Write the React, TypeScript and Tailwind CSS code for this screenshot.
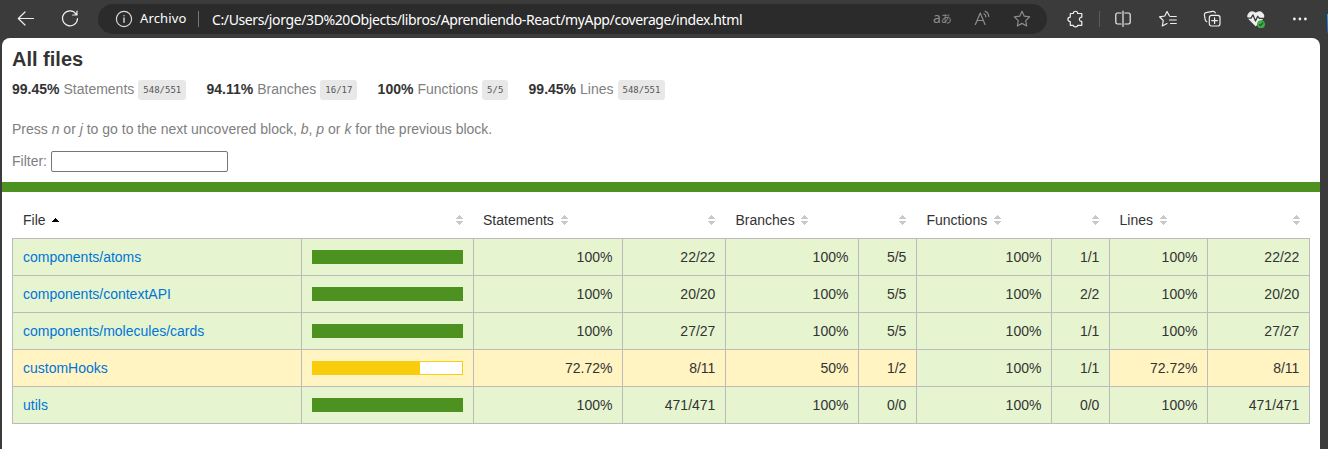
import type { ReactNode } from "react";

type Level = "high" | "medium";
type Row = { file: string; pct: number; level: Level; cells: { text: string; level: Level }[] };

const h = (text: string) => ({ text, level: "high" as Level });
const m = (text: string) => ({ text, level: "medium" as Level });

const rows: Row[] = [
  { file: "components/atoms", pct: 100, level: "high", cells: [h("100%"), h("22/22"), h("100%"), h("5/5"), h("100%"), h("1/1"), h("100%"), h("22/22")] },
  { file: "components/contextAPI", pct: 100, level: "high", cells: [h("100%"), h("20/20"), h("100%"), h("5/5"), h("100%"), h("2/2"), h("100%"), h("20/20")] },
  { file: "components/molecules/cards", pct: 100, level: "high", cells: [h("100%"), h("27/27"), h("100%"), h("5/5"), h("100%"), h("1/1"), h("100%"), h("27/27")] },
  { file: "customHooks", pct: 72, level: "medium", cells: [m("72.72%"), m("8/11"), m("50%"), m("1/2"), h("100%"), h("1/1"), m("72.72%"), m("8/11")] },
  { file: "utils", pct: 100, level: "high", cells: [h("100%"), h("471/471"), h("100%"), h("0/0"), h("100%"), h("0/0"), h("100%"), h("471/471")] },
];

const stats = [
  { pct: "99.45%", label: "Statements", frac: "548/551" },
  { pct: "94.11%", label: "Branches", frac: "16/17" },
  { pct: "100%", label: "Functions", frac: "5/5" },
  { pct: "99.45%", label: "Lines", frac: "548/551" },
];

const levelBg: Record<Level, string> = { high: "bg-[#e6f5d0]", medium: "bg-[#fff4c2]" };
const columns = ["File", "", "Statements", "", "Branches", "", "Functions", "", "Lines", ""];

function Sorter({ active = false }: { active?: boolean }) {
  return (
    <svg width="8" height="10" viewBox="0 0 8 10" className="shrink-0" shapeRendering="crispEdges">
      {active ? (
        <path d="M4 3L8 7H0z" fill="#000" />
      ) : (
        <path d="M4 0L8 4H0zM0 6h8L4 10z" fill="#c9c9c9" />
      )}
    </svg>
  );
}

function Icon({ children, className = "" }: { children: ReactNode; className?: string }) {
  return (
    <svg width="20" height="20" viewBox="0 0 20 20" fill="none" stroke="currentColor" strokeWidth="1.2" strokeLinecap="round" strokeLinejoin="round" className={`shrink-0 ${className}`}>
      {children}
    </svg>
  );
}

function BrowserBar() {
  return (
    <header className="flex h-[38px] shrink-0 items-center bg-[#3b3b3b] text-[#eeeeee]">
      <Icon className="ml-4">
        <path d="M17.5 9.5H2.5M9 3L2.3 9.5L9 16" />
      </Icon>
      <Icon className="ml-6">
        <path d="M16.3 5.3A7.5 7.5 0 1 0 17.5 9.5M17 2v4h-4.3" />
      </Icon>
      <div className="ml-[18px] flex h-[30px] w-[949px] items-center rounded-full bg-[#2b2b2b]">
        <Icon className="ml-4 text-[#d8d8d8]">
          <circle cx="10" cy="10" r="7.6" />
          <path d="M10 9v4.3M10 6.6v.1" strokeWidth="1.4" />
        </Icon>
        <span className="ml-[6px] w-[58px] whitespace-nowrap font-['Noto_Sans',sans-serif] text-[13px] tracking-[0.15px] text-white">Archivo</span>
        <span className="h-4 w-px bg-[#777777]" />
        <span className="ml-[13px] w-[721px] whitespace-nowrap font-['Noto_Sans',sans-serif] text-[14px] tracking-[-0.385px] text-white">
          C:/Users/jorge/3D%20Objects/libros/Aprendiendo-React/myApp/coverage/index.html
        </span>
        <span className="flex w-[19px] items-baseline pb-[2px] leading-none text-[#8d8d8d]">
          <span className="font-['Noto_Sans',sans-serif] text-[14px]">a</span>
          <span className="font-['Noto_Sans_CJK_JP',sans-serif] text-[11px] leading-none">あ</span>
        </span>
        <Icon className="ml-[20px] text-[#8d8d8d]">
          <path d="M3.4 15.5L8.2 4L13 15.5M5 11.5h6.4M12 4.7q1.9 1 1.8 3.1M13.2 2.2q3.6 1.8 3.5 5.3" />
        </Icon>
        <Icon className="ml-5 text-[#8d8d8d]">
          <path d="M10 2.3l2.3 4.9 5.4.7-4 3.7 1 5.4-4.7-2.6L5.3 17l1-5.4-4-3.7 5.4-.7z" />
        </Icon>
      </div>
      <Icon className="ml-[18px]">
        <path d="M5.3 4.5h3c0-3 4.4-3 4.4 0h4.1v3.7c-3.2-.2-3.2 4.4 0 4.2v3.9h-4.1c0 2.1-4.4 2.1-4.4 0h-3v-3.8c-3.2 0-3.2-4.4 0-4.4z" />
      </Icon>
      <span className="ml-[14px] h-4 w-px bg-[#5b5b5b]" />
      <Icon className="ml-[13px]">
        <path d="M8.2 4H4.5Q2.8 4 2.8 5.7v7.6Q2.8 15 4.5 15H8.2M11.8 4h3.7q1.7 0 1.7 1.7v7.6q0 1.7-1.7 1.7h-3.7M10 2v15.5" />
      </Icon>
      <Icon className="ml-[25px]">
        <path d="M11.5 7L9 2.5L6.8 7L1.5 7.8L5.3 11.5L4.3 17L9 14.5M12.5 7.5h5.8M11.5 11h6.8M12.5 14.5h5.8" />
      </Icon>
      <Icon className="ml-[24px]">
        <rect x="7.3" y="6.3" width="10.7" height="10.7" rx="2.2" />
        <path d="M12.6 8.8v5.6M9.8 11.6h5.6M4.8 12.7Q3.4 12 3.2 10.6L2.4 6Q2.2 4.2 4 3.7l6.7-1.3q2-.3 2.6 1.5" />
      </Icon>
      <Icon className="ml-[24px]">
        <path d="M9.7 16.5L3 9.8C-.2 6 4.8.2 9.7 4.5C14.6.2 19.8 6 16.5 9.8z" fill="#eeeeee" />
        <path d="M1 9.2h4l2-3.3 2.5 6.2 2.2-4.8 1.7 2H18" stroke="#3b3b3b" strokeWidth="1.3" />
        <circle cx="15" cy="15.2" r="3.9" fill="#3fae49" stroke="none" />
        <path d="M13.3 15.6l1.1 1 2.4-2.6" stroke="#1f5c25" />
      </Icon>
      <Icon className="ml-[24px]">
        <g fill="#eeeeee" stroke="none">
          <circle cx="4.4" cy="10" r="1.4" />
          <circle cx="9.9" cy="10" r="1.4" />
          <circle cx="15.4" cy="10" r="1.4" />
        </g>
      </Icon>
      <span className="ml-auto mt-[9px] h-[19px] w-px bg-linear-to-b from-[#2ba3dc] to-[#2450c8]" />
    </header>
  );
}

function CoverageTable() {
  return (
    <table className="ml-[10px] mt-[9px] w-[1298px] table-fixed border-separate border-spacing-0">
      <colgroup>
        <col className="w-[289px]" />
        <col className="w-[172px]" />
        <col className="w-[149px]" />
        <col className="w-[103px]" />
        <col className="w-[133px]" />
        <col className="w-[58px]" />
        <col className="w-[135px]" />
        <col className="w-[58px]" />
        <col className="w-[98px]" />
        <col className="w-[103px]" />
      </colgroup>
      <thead>
        <tr className="h-[37px]">
          {columns.map((label, i) => (
            <th key={i} className={`p-0 font-normal ${label === "File" ? "pl-[11px]" : label === "Statements" ? "pl-[10px]" : "pl-[10.5px]"} pr-[10px]`}>
              <div className={`flex items-center ${label === "File" ? "gap-[5px]" : label === "Branches" ? "gap-[5.4px]" : label ? "gap-[6px]" : "justify-end"}`}>
                {label && <span>{label}</span>}
                <Sorter active={label === "File"} />
              </div>
            </th>
          ))}
        </tr>
      </thead>
      <tbody>
        {rows.map((row) => (
          <tr key={row.file} className="h-[37px] [&>td]:border-l [&>td]:border-t [&>td]:border-[#bbbbbb] [&>td]:py-0 [&>td]:pl-[10px] [&>td]:pr-[9.6px] [&>td:last-child]:border-r last:[&>td]:border-b last:h-[38px]">
            <td className={`${levelBg[row.level]} text-[#0074d9]`}>
              <a>{row.file}</a>
            </td>
            <td className={levelBg[row.level]}>
              <div className={`h-[14px] w-[151px] border bg-white ${row.level === "high" ? "border-[#4d9221]" : "border-[#f9cd0b]"}`}>
                <div className={`h-full ${row.level === "high" ? "bg-[#4d9221]" : "bg-[#f9cd0b]"}`} style={{ width: `${row.pct}%` }} />
              </div>
            </td>
            {row.cells.map((c, i) => (
              <td key={i} className={`${levelBg[c.level]} text-right`}>
                {c.text}
              </td>
            ))}
          </tr>
        ))}
      </tbody>
    </table>
  );
}

export default function App() {
  return (
    <div className="flex h-[449px] w-[1328px] flex-col overflow-hidden bg-[#3b3b3b]">
      <BrowserBar />
      <main className="ml-[2px] w-[1318px] grow rounded-t-[8px] bg-white pt-[11px] font-['Liberation_Sans',Arial,sans-serif] text-[14px] leading-5 text-[#333333]">
        <h1 className="ml-[10px] text-[20px] font-bold leading-5">All files</h1>
        <div className="ml-[10px] mt-[10px] flex h-5 items-start gap-[20.2px]">
          {stats.map((s) => (
            <div key={s.label} className="flex items-start gap-1">
              <span className="font-bold">{s.pct}</span>
              <span className="text-[#808080]">{s.label}</span>
              <span className="mt-px h-5 rounded-[3px] bg-[#e8e8e8] px-[5px] font-['DejaVu_Sans_Mono','Liberation_Mono',monospace] text-[9px] leading-[20px] text-[#555555]">{s.frac}</span>
            </div>
          ))}
        </div>
        <p className="ml-[10px] mt-[20px] text-[#808080]">
          Press <em>n</em> or <em>j</em> to go to the next uncovered block, <em>b</em>, <em>p</em> or <em>k</em> for the previous block.
        </p>
        <div className="ml-[10px] mt-3 flex items-start gap-1 text-[#808080]">
          <label htmlFor="filter">Filter:</label>
          <input id="filter" type="search" className="h-[21px] w-[177px] rounded-[2px] border border-[#767676] bg-white" />
        </div>
        <div className="mt-[10px] h-[10px] bg-[#4d9221]" />
        <CoverageTable />
      </main>
    </div>
  );
}
